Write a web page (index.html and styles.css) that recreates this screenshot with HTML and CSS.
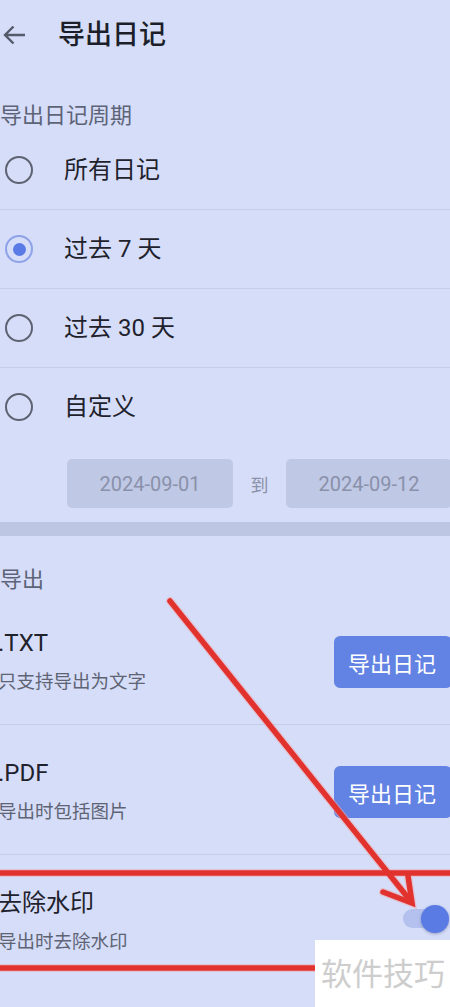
FILE: index.html
```html
<!DOCTYPE html>
<html>
<head>
    <meta charset="utf-8">
    <title>导出日记</title>
    <meta name="viewport" content="width=device-width" />
    <link rel="stylesheet" href="styles.css">
</head>
<body>
    <div class="header">
        <svg class="back" viewBox="0 0 23 20"><path d="M22 10H2M10.5 1.5L2 10l8.5 8.5" /></svg>
        <h1>导出日记</h1>
    </div>

    <div class="label">导出日记周期</div>
    <div class="radio-row">
        <span class="radio"></span>
        <span class="radio-text">所有日记</span>
    </div>
    <div class="radio-row">
        <span class="radio checked"></span>
        <span class="radio-text">过去 7 天</span>
    </div>
    <div class="radio-row">
        <span class="radio"></span>
        <span class="radio-text">过去 30 天</span>
    </div>
    <div class="radio-row last">
        <span class="radio"></span>
        <span class="radio-text">自定义</span>
    </div>
    <div class="dates">
        <div class="date">2024-09-01</div>
        <div class="to">到</div>
        <div class="date">2024-09-12</div>
    </div>

    <div class="band"></div>

    <div class="label second">导出</div>
    <div class="item">
        <div class="item-text">
            <div class="item-title">.TXT</div>
            <div class="item-sub">只支持导出为文字</div>
        </div>
        <div class="btn">导出日记</div>
    </div>
    <div class="item">
        <div class="item-text">
            <div class="item-title">.PDF</div>
            <div class="item-sub">导出时包括图片</div>
        </div>
        <div class="btn">导出日记</div>
    </div>
    <div class="item last">
        <div class="item-text">
            <div class="item-title">去除水印</div>
            <div class="item-sub">导出时去除水印</div>
        </div>
        <div class="switch"></div>
    </div>

    <!-- red marks drawn over the screenshot -->
    <svg class="marks" viewBox="0 0 450 1007">
        <g class="halo">
            <line x1="0" y1="873" x2="450" y2="873" />
            <line x1="0" y1="968" x2="315" y2="968" />
            <line x1="170" y1="601" x2="409" y2="899" />
            <polyline points="383,892 412,903 408,876" />
        </g>
        <g class="red">
            <line x1="0" y1="873" x2="450" y2="873" />
            <line x1="0" y1="968" x2="315" y2="968" />
            <line x1="170" y1="601" x2="409" y2="899" />
            <polyline points="383,892 412,903 408,876" />
        </g>
    </svg>
    <div class="stamp">软件技巧</div>
</body>
</html>
```

FILE: styles.css
```css
body {
    margin: 0px;
    width: 450px;
    height: 1007px;
    overflow: hidden;
    position: relative;
    background-color: #d5ddf8;
    color: #1f222c;
    font-family: Roboto, "Noto Sans CJK SC", sans-serif;
}

.header {
    height: 70px;
    display: flex;
    align-items: center;
}
.back {
    width: 23px;
    height: 20px;
    margin-left: 3px;
    fill: none;
    stroke: #555b6b;
    stroke-width: 2.4;
}
.header h1 {
    margin: 0 0 0 32px;
    font-size: 27px;
    line-height: 34px;
    font-weight: 500;
    color: #1c1f29;
}

.label {
    padding: 33px 0 2px;
    font-size: 22px;
    line-height: 26px;
    color: #5e6478;
}
.label.second {
    padding-top: 31px;
}

.radio-row {
    height: 78px;
    padding-left: 5px;
    display: flex;
    align-items: center;
    border-bottom: 1px solid #c5cde9;
}
.radio-row.last {
    border-bottom: none;
}
.radio {
    width: 28px;
    height: 28px;
    box-sizing: border-box;
    border: 2.5px solid #5e6372;
    border-radius: 50%;
    display: flex;
    align-items: center;
    justify-content: center;
}
.radio.checked {
    border-color: #8ea2e8;
}
.radio.checked::after {
    content: "";
    width: 13px;
    height: 13px;
    border-radius: 50%;
    background-color: #5a7be6;
}
.radio-text {
    margin-left: 31px;
    font-size: 24px;
    line-height: 30px;
}

.dates {
    padding: 13px 0 14px 67px;
    display: flex;
    align-items: center;
}
.date {
    flex: none;
    width: 166px;
    height: 49px;
    border-radius: 5px;
    background-color: #bfc8e5;
    color: #8a91aa;
    font-size: 20px;
    display: flex;
    align-items: center;
    justify-content: center;
}
.to {
    flex: none;
    width: 53px;
    text-align: center;
    font-size: 18px;
    color: #8b91a8;
}

.band {
    height: 14px;
    background-color: #bdc6e3;
}

.item {
    padding: 34px 0 30px;
    display: flex;
    align-items: center;
    justify-content: space-between;
    border-bottom: 1px solid #c5cde9;
}
.item.last {
    border-bottom: none;
    align-items: flex-start;
}
.item-text {
    margin-left: -2px;
}
.item-title {
    font-size: 24px;
    line-height: 28px;
}
.item-sub {
    margin-top: 13px;
    font-size: 18.5px;
    line-height: 24px;
    color: #5f6475;
}
.btn {
    flex: none;
    width: 118px;
    height: 52px;
    margin-right: -2px;
    border-radius: 6px;
    background-color: #6283e3;
    color: #fff;
    font-size: 22px;
    display: flex;
    align-items: center;
    padding-left: 14px;
    box-sizing: border-box;
}
.switch {
    flex: none;
    width: 37px;
    height: 19px;
    margin: 20px 10px 0 0;
    border-radius: 10px;
    background-color: #b4c1ee;
    position: relative;
}
.switch::after {
    content: "";
    position: absolute;
    right: -9px;
    top: -4.5px;
    width: 28px;
    height: 28px;
    border-radius: 50%;
    background-color: #5b7be4;
    box-shadow: 0 1px 3px rgba(40, 50, 100, 0.35);
}

.marks {
    position: absolute;
    left: 0;
    top: 0;
    width: 450px;
    height: 1007px;
    pointer-events: none;
}
.marks g {
    fill: none;
    stroke-linecap: round;
    stroke-linejoin: miter;
}
.marks .halo {
    stroke: #f2a6ac;
    stroke-width: 8;
    opacity: 0.5;
}
.marks .red {
    stroke: #e2322d;
    stroke-width: 5.5;
}

.stamp {
    position: absolute;
    left: 315px;
    top: 940px;
    width: 135px;
    height: 67px;
    padding-left: 6px;
    box-sizing: border-box;
    background-color: #fff;
    color: #cdcdcd;
    font-size: 31px;
    line-height: 70px;
    white-space: nowrap;
}
```
